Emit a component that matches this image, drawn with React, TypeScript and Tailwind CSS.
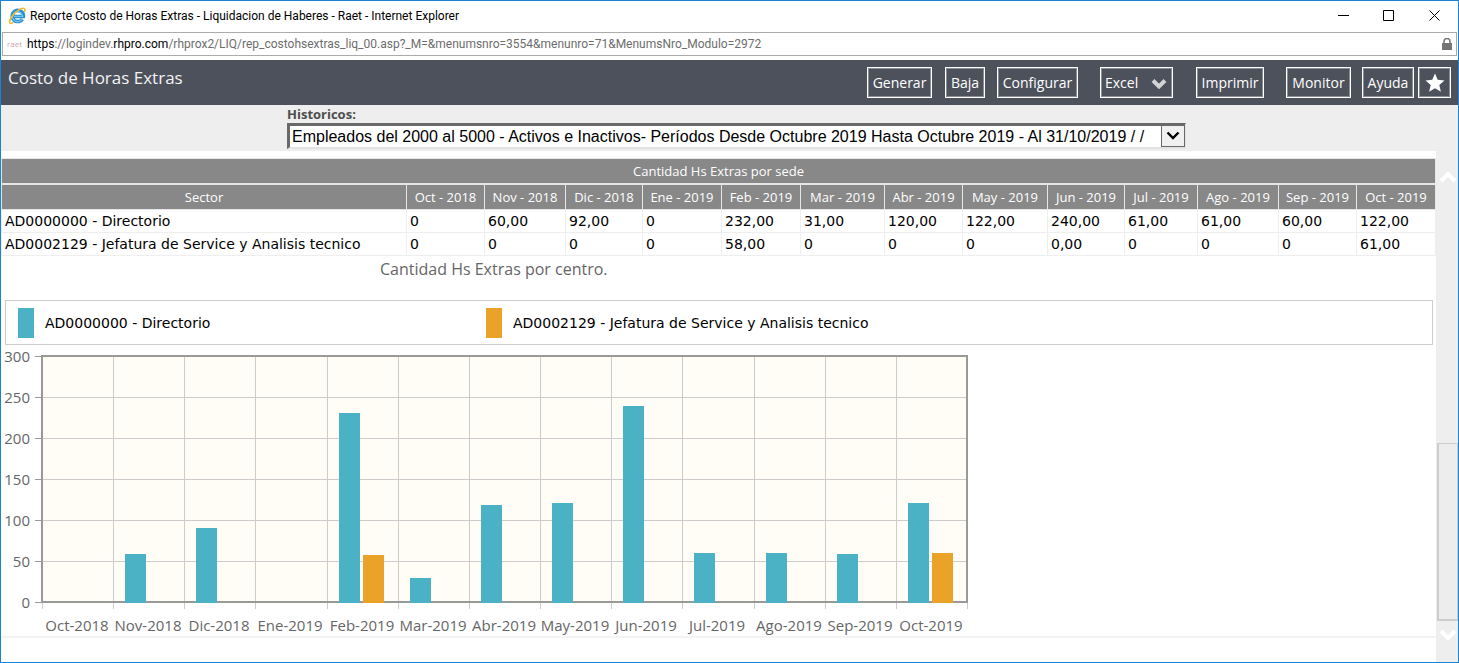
const months = [
  { table: 'Oct - 2018', axis: 'Oct-2018', directorio: '0', jefatura: '0' },
  { table: 'Nov - 2018', axis: 'Nov-2018', directorio: '60,00', jefatura: '0' },
  { table: 'Dic - 2018', axis: 'Dic-2018', directorio: '92,00', jefatura: '0' },
  { table: 'Ene - 2019', axis: 'Ene-2019', directorio: '0', jefatura: '0' },
  { table: 'Feb - 2019', axis: 'Feb-2019', directorio: '232,00', jefatura: '58,00' },
  { table: 'Mar - 2019', axis: 'Mar-2019', directorio: '31,00', jefatura: '0' },
  { table: 'Abr - 2019', axis: 'Abr-2019', directorio: '120,00', jefatura: '0' },
  { table: 'May - 2019', axis: 'May-2019', directorio: '122,00', jefatura: '0' },
  { table: 'Jun - 2019', axis: 'Jun-2019', directorio: '240,00', jefatura: '0,00' },
  { table: 'Jul - 2019', axis: 'Jul-2019', directorio: '61,00', jefatura: '0' },
  { table: 'Ago - 2019', axis: 'Ago-2019', directorio: '61,00', jefatura: '0' },
  { table: 'Sep - 2019', axis: 'Sep-2019', directorio: '60,00', jefatura: '0' },
  { table: 'Oct - 2019', axis: 'Oct-2019', directorio: '122,00', jefatura: '61,00' },
];

const sectors = [
  { name: 'AD0000000 - Directorio', key: 'directorio' as const },
  { name: 'AD0002129 - Jefatura de Service y Analisis tecnico', key: 'jefatura' as const },
];

const toNumber = (value: string) => parseFloat(value.replace(',', '.'));

const toolbarButton = 'h-[31px] border border-white shadow-[inset_0_0_0_1px_#8a8d95] text-white text-sm leading-7 text-center whitespace-nowrap';

function BrowserIcon() {
  return (
    <svg width="18" height="18" viewBox="0 0 18 18" fill="none" aria-hidden="true">
      <path d="M14.4 12.200a5.600 5.600 0 1 1 1-2.700H5" stroke="#2b8fd6" strokeWidth="3.600" />
      <path d="M13.8 12.400a5 5 0 1 1 .8-3H6" stroke="#6cc5f3" strokeWidth="1.400" />
      <path d="M4.500 15.800C1 18 .2 14.500 4.400 8.800 8.600 3.200 14.600.4 16.400 1.600c.9.6.7 1.800.2 2.800" stroke="#f0b92c" strokeWidth="1.600" strokeLinecap="round" />
    </svg>
  );
}

function TitleBar() {
  return (
    <div className="flex items-center h-[31px] pl-[7px] pb-[2px]">
      <BrowserIcon />
      <h1 className="flex-1 pl-1 text-xs text-black font-[Roboto,sans-serif]">
        Reporte Costo de Horas Extras - Liquidacion de Haberes - Raet - Internet Explorer
      </h1>
      <div className="flex">
        <button className="w-[45px] h-7 flex items-center justify-center" aria-label="Minimizar">
          <svg width="11" height="11" stroke="#000"><path d="M0 5.500h11" /></svg>
        </button>
        <button className="w-[45px] h-7 flex items-center justify-center" aria-label="Maximizar">
          <svg width="11" height="11" stroke="#000" fill="none"><path d="M.5.5h10v10H.5z" /></svg>
        </button>
        <button className="w-[47px] h-7 flex items-center justify-center" aria-label="Cerrar">
          <svg width="11" height="11" stroke="#000"><path d="M.5.5l10 10M10.500.5l-10 10" /></svg>
        </button>
      </div>
    </div>
  );
}

function AddressBar() {
  return (
    <div className="flex items-center h-6 mx-px mb-1 border border-[#ababab] px-1">
      <span className="w-5 text-[8px] leading-none text-[#c9a9ae]">raet</span>
      <p className="flex-1 text-xs text-[#6d6d6d] font-[Roboto,sans-serif]">
        <span className="text-black">https</span>://logindev.<span className="text-black">rhpro.com</span>
        /rhprox2/LIQ/rep_costohsextras_liq_00.asp?_M=&amp;menumsnro=3554&amp;menunro=71&amp;MenumsNro_Modulo=2972
      </p>
      <svg width="10" height="12" viewBox="0 0 10 12" aria-hidden="true">
        <path d="M2 6V3.500a3 3 0 0 1 6 0V6" fill="none" stroke="#757575" strokeWidth="1.500" />
        <path d="M0 5h10v7H0z" fill="#757575" />
      </svg>
    </div>
  );
}

function Toolbar() {
  return (
    <div className="flex items-start justify-between h-[45px] bg-[#4d515c] px-[7px]">
      <h2 className="pt-1 text-[17px] leading-7 text-[#f3f3f4]">Costo de Horas Extras</h2>
      <div className="flex pt-[7px]">
        <button className={`${toolbarButton} w-[65px] mr-[13px]`}>Generar</button>
        <button className={`${toolbarButton} w-10 mr-3`}>Baja</button>
        <button className={`${toolbarButton} w-[81px] mr-[22px]`}>Configurar</button>
        <button className={`${toolbarButton} w-[73px] mr-[23px] flex items-center justify-between pl-1 pr-[5px]`}>
          Excel
          <svg width="16" height="14" viewBox="0 0 16 14" fill="none" aria-hidden="true">
            <path d="M2 4.500l6 6 6-6" stroke="#d2d3d6" strokeWidth="4" />
          </svg>
        </button>
        <button className={`${toolbarButton} w-[68px] mr-[22px]`}>Imprimir</button>
        <button className={`${toolbarButton} w-[65px] mr-[11px]`}>Monitor</button>
        <button className={`${toolbarButton} w-[52px] mr-1`}>Ayuda</button>
        <button className={`${toolbarButton} w-[33px] flex items-center justify-center`} aria-label="Favoritos">
          <svg width="20" height="20" viewBox="0 0 20 20" fill="#fff" aria-hidden="true">
            <path d="M10 .5l2.700 6.300 6.800.6-5.200 4.500 1.600 6.800L10 15.200l-5.900 3.500 1.600-6.800L.5 7.400l6.800-.6z" />
          </svg>
        </button>
      </div>
    </div>
  );
}

function HistoryFilter() {
  return (
    <div className="h-[46px] bg-[#eee] pl-[286px] pt-px">
      <label htmlFor="historicos" className="block text-[13px] leading-[17px] font-bold text-[#4d4d4d]">
        Historicos:
      </label>
      <div className="relative w-[899px] max-w-full">
        <select
          id="historicos"
          className="block w-full h-[26px] appearance-none rounded-none bg-white border-t-[3px] border-l-[3px] border-b-2 border-r-2 border-t-[#696969] border-l-[#696969] border-b-[#e3e3e3] border-r-[#e3e3e3] pl-[2px] pr-6 text-base leading-[20px] text-black font-['Liberation_Sans',Arial,sans-serif]"
        >
          <option>
            Empleados del 2000 al 5000 - Activos e Inactivos- Períodos Desde Octubre 2019 Hasta Octubre 2019 - Al 31/10/2019 / /
          </option>
        </select>
        <span className="absolute right-px top-[2px] w-6 h-[22px] flex items-center justify-center bg-[#f0f0f0] border border-[#696969] pointer-events-none">
          <svg width="14" height="10" viewBox="0 0 14 10" fill="none" aria-hidden="true">
            <path d="M1.500 1.500l5.500 5.500L12.500 1.500" stroke="#000" strokeWidth="2.400" />
          </svg>
        </span>
      </div>
    </div>
  );
}

const headCell = 'border border-[#e6e6e6] bg-[#888] text-[13px] font-normal text-white text-center whitespace-nowrap';
const bodyCell = 'border border-[#eee] px-[3px] whitespace-nowrap';

function HoursTable() {
  return (
    <table className="w-full table-fixed border-collapse text-sm leading-5 text-black">
      <colgroup>
        <col />
        <col className="w-[78px]" />
        <col className="w-[81px]" />
        <col className="w-[77px]" />
        <col className="w-[79px]" />
        <col className="w-[79px]" />
        <col className="w-[84px]" />
        <col className="w-[78px]" />
        <col className="w-[85px]" />
        <col className="w-[77px]" />
        <col className="w-[73px]" />
        <col className="w-[81px]" />
        <col className="w-[78px]" />
        <col className="w-[79px]" />
      </colgroup>
      <thead>
        <tr className="h-[25px]">
          <th className={`${headCell} border-b-2`} colSpan={14}>Cantidad Hs Extras por sede</th>
        </tr>
        <tr className="h-[26px]">
          <th className={headCell}>Sector</th>
          {months.map((month) => (
            <th key={month.table} className={headCell}>{month.table}</th>
          ))}
        </tr>
      </thead>
      <tbody className="font-['DejaVu_Sans',Verdana,sans-serif]">
        {sectors.map((sector) => (
          <tr key={sector.key} className="h-[23px]">
            <td className={bodyCell}>{sector.name}</td>
            {months.map((month) => (
              <td key={month.table} className={bodyCell}>{month[sector.key]}</td>
            ))}
          </tr>
        ))}
      </tbody>
    </table>
  );
}

function Legend() {
  return (
    <div className="flex items-center h-[45px] ml-1 mr-[3px] border border-[#ccc] pl-3 text-sm text-black font-['DejaVu_Sans',Verdana,sans-serif]">
      <div className="flex items-center w-[468px]">
        <span className="w-4 h-[30px] mr-[11px] bg-[#4bb2c5]" />
        {sectors[0].name}
      </div>
      <div className="flex items-center">
        <span className="w-4 h-[30px] mr-[11px] bg-[#eaa228]" />
        {sectors[1].name}
      </div>
    </div>
  );
}

// Plot area of the bar chart, in svg units
const plot = { left: 41, top: 11, width: 925, height: 246, max: 300 };
const step = plot.width / months.length;
const ticks = [0, 50, 100, 150, 200, 250, 300];
const yOf = (value: number) => Math.round(plot.top + plot.height - (value / plot.max) * plot.height);
const xOf = (index: number) => Math.round(plot.left + index * step);

function BarChart() {
  const bottom = plot.top + plot.height;
  return (
    <svg width="971" height="291" className="block text-[15px] font-medium" fill="#666" role="img" aria-label="Cantidad Hs Extras por centro">
      <rect x={plot.left} y={plot.top} width={plot.width} height={plot.height} fill="#fffdf6" />
      {ticks.map((tick) => (
        <g key={tick}>
          <path d={`M${plot.left} ${yOf(tick) + 0.5}h${plot.width}`} stroke="#ccc" />
          <path d={`M${plot.left - 7} ${yOf(tick) + 0.5}h7`} stroke="#999" />
          <text x={plot.left - 12} y={yOf(tick) + 6} textAnchor="end">{tick}</text>
        </g>
      ))}
      {[...months, null].map((_, i) => (
        <path key={i} d={`M${xOf(i) + 0.5} ${plot.top}v${plot.height + 7}`} stroke="#ccc" />
      ))}
      <rect x={plot.left} y={plot.top} width={plot.width} height={plot.height} fill="none" stroke="#999" strokeWidth="2" />
      {months.map((month, i) => {
        const a = toNumber(month.directorio);
        const b = toNumber(month.jefatura);
        return (
          <g key={month.axis}>
            {a > 0 && <rect x={xOf(i) + 12} y={yOf(a) + 1} width="21" height={bottom - yOf(a)} fill="#4bb2c5" />}
            {b > 0 && <rect x={xOf(i) + 36} y={yOf(b) + 1} width="21" height={bottom - yOf(b)} fill="#eaa228" />}
            <text x={xOf(i) + 35} y={bottom + 29} textAnchor="middle">{month.axis}</text>
          </g>
        );
      })}
    </svg>
  );
}

function ScrollRail() {
  return (
    <div className="flex flex-col items-center w-[22px] bg-[#eee]" aria-hidden="true">
      <svg width="18" height="12" viewBox="0 0 18 12" fill="none" className="mt-5 ml-[2px]">
        <path d="M2 10l7-7 7 7" stroke="#fff" strokeWidth="4" />
      </svg>
      <div className="flex-1" />
      <div className="w-[21px] h-[178px] border-2 border-r border-t border-[#ccc] bg-[#ededed]" />
      <svg width="18" height="12" viewBox="0 0 18 12" fill="none" className="mt-2 mb-[21px] ml-[2px]">
        <path d="M2 2l7 7 7-7" stroke="#fff" strokeWidth="4" />
      </svg>
    </div>
  );
}

export default function App() {
  return (
    <div className="min-h-screen flex flex-col border border-[#1883d7] bg-white font-['Open_Sans','Noto_Sans',sans-serif]">
      <TitleBar />
      <AddressBar />
      <Toolbar />
      <HistoryFilter />
      <main className="flex flex-1">
        <div className="flex-1 min-w-0 pt-[7px]">
          <HoursTable />
          <p className="pt-[2px] pl-[379px] pb-[19px] text-base leading-[23px] text-[#666]">Cantidad Hs Extras por centro.</p>
          <Legend />
          <div className="border-b-2 border-[#f3f3f3]">
            <BarChart />
          </div>
        </div>
        <ScrollRail />
      </main>
    </div>
  );
}
